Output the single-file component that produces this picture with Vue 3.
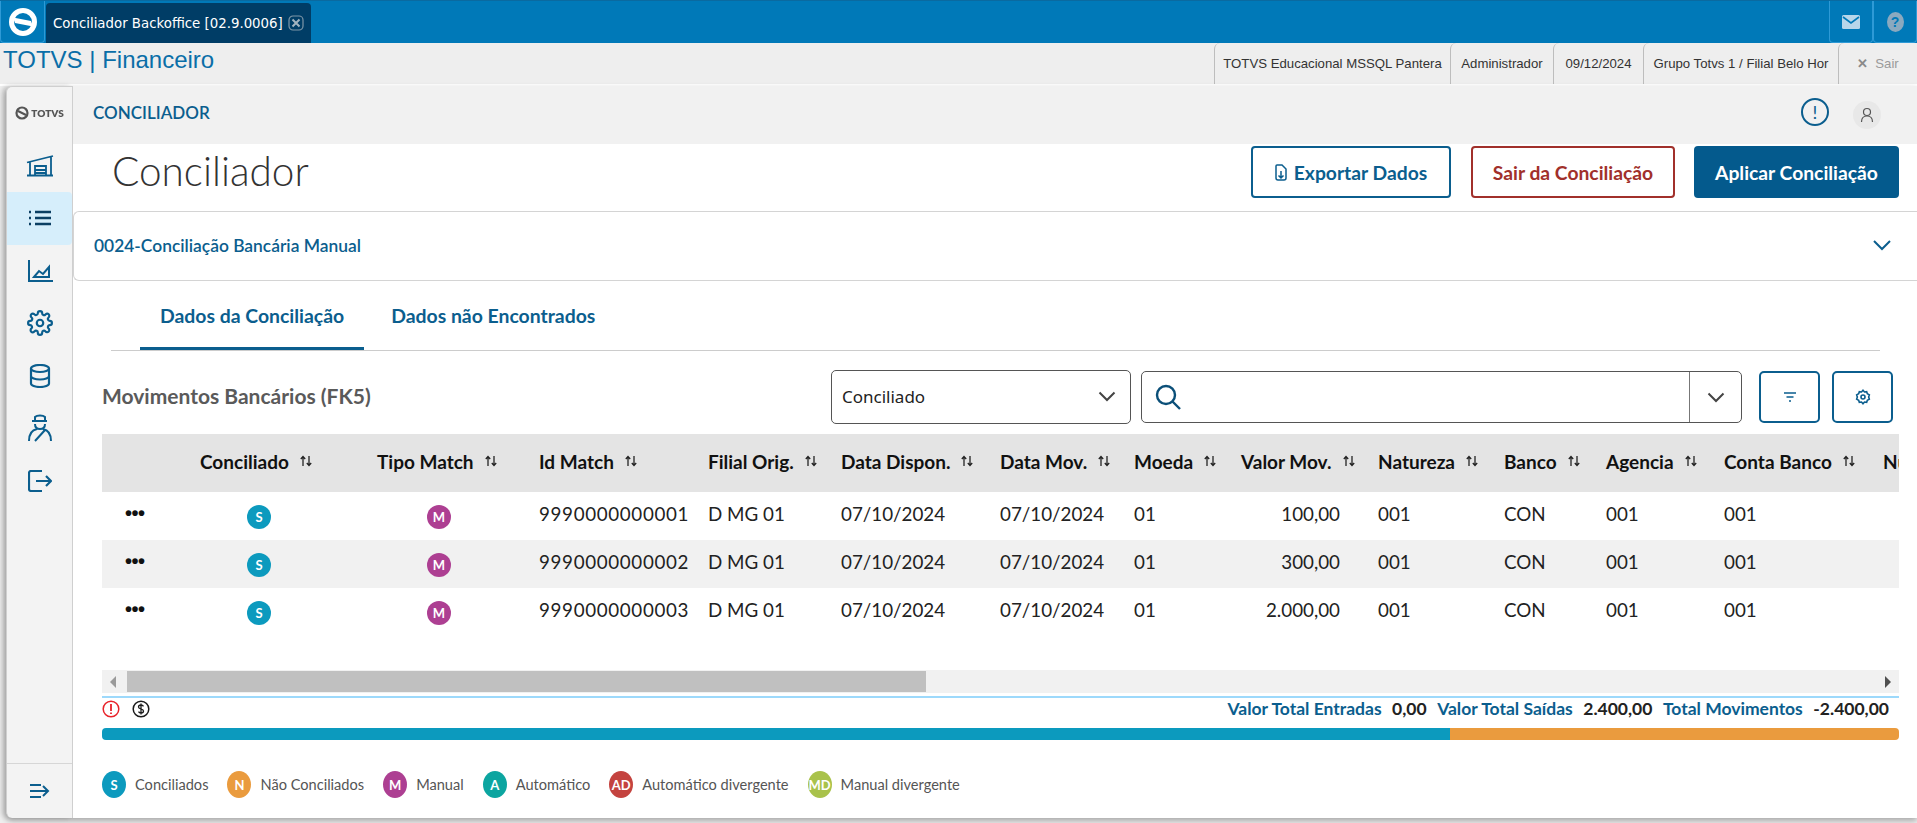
<script setup>
const columns = [
  { label: '', w: 98 }, { label: 'Conciliado', w: 177 }, { label: 'Tipo Match', w: 162 }, { label: 'Id Match', w: 169 },
  { label: 'Filial Orig.', w: 133 }, { label: 'Data Dispon.', w: 159 }, { label: 'Data Mov.', w: 134 }, { label: 'Moeda', w: 107 },
  { label: 'Valor Mov.', w: 137 }, { label: 'Natureza', w: 126 }, { label: 'Banco', w: 102 }, { label: 'Agencia', w: 118 },
  { label: 'Conta Banco', w: 159 }, { label: 'Nu', w: 80 }
]
const gridTemplate = columns.map(c => c.w + 'px').join(' ')
const rows = [
  { id: '9990000000001', valor: '100,00' },
  { id: '9990000000002', valor: '300,00' },
  { id: '9990000000003', valor: '2.000,00' }
]
const legend = [
  { k: 'S', t: 'Conciliados', c: '#0c9abe' }, { k: 'N', t: 'Não Conciliados', c: '#ea9b3e' },
  { k: 'M', t: 'Manual', c: '#ad3f92' }, { k: 'A', t: 'Automático', c: '#0ca5a0' },
  { k: 'AD', t: 'Automático divergente', c: '#c4433f' }, { k: 'MD', t: 'Manual divergente', c: '#a9c24b' }
]
const infoCells = [
  { t: 'TOTVS Educacional MSSQL Pantera', w: 236 }, { t: 'Administrador', w: 103 },
  { t: '09/12/2024', w: 90 }, { t: 'Grupo Totvs 1 / Filial Belo Hor', w: 195 }
]
</script>

<template>
  <div class="page">
    <header class="topbar">
      <div class="logo-btn">
        <svg width="32" height="32" viewBox="0 0 32 32"><circle cx="16" cy="16" r="11.500" fill="none" stroke="#fff" stroke-width="5"/><path d="M6 11.500 L24 15 L26 20.500 L8 17 Z" fill="#fff"/></svg>
      </div>
      <div class="app-tab">
        <span>Conciliador Backoffice [02.9.0006]</span>
        <svg width="16" height="16" viewBox="0 0 16 16" class="tab-x"><rect x="1" y="1" width="14" height="14" rx="4" fill="none" stroke="#7f97a8" stroke-width="1.200"/><path d="M4.500 4.500l7 7M11.500 4.500l-7 7" stroke="#a3b4c0" stroke-width="2"/></svg>
      </div>
      <div class="top-actions">
        <div class="top-btn"><svg width="18" height="14" viewBox="0 0 18 14"><rect width="18" height="14" rx="1.500" fill="#b7d6ea"/><path d="M1 2l8 6 8-6" stroke="#0079b8" stroke-width="1.600" fill="none"/></svg></div>
        <div class="top-btn"><span class="help">?</span></div>
      </div>
    </header>

    <div class="infobar">
      <div class="product">TOTVS | Financeiro</div>
      <div class="info-cells">
        <div v-for="c in infoCells" :key="c.t" class="info-cell" :style="{ width: c.w + 'px' }">{{ c.t }}</div>
        <div class="info-cell exit"><span class="exit-x">✕</span> Sair</div>
      </div>
    </div>

    <div class="main">
      <aside class="sidebar">
        <div class="side-logo">
          <svg width="14" height="14" viewBox="0 0 14 14"><circle cx="7" cy="7" r="5.500" fill="none" stroke="#555" stroke-width="2.200"/><path d="M3 5l8 4" stroke="#555" stroke-width="2"/></svg>
          <span>TOTVS</span>
        </div>
        <div class="side-item">
          <svg width="28" height="22" viewBox="0 0 28 22" fill="none" stroke="#0b5e8e" stroke-width="1.800"><path d="M1 20.500h26M1 7.500 27 1M4 7v13.500M25 1.500v19M9 20.500V11h11v9.500M9 15h11M9 18h11"/></svg>
        </div>
        <div class="side-item active">
          <svg width="24" height="16" viewBox="0 0 24 16" fill="none" stroke="#0b3f63" stroke-width="2.500"><path d="M7 2h16M7 8h16M7 14h16M1 2h2M1 8h2M1 14h2"/></svg>
        </div>
        <div class="side-item">
          <svg width="26" height="24" viewBox="0 0 26 24" fill="none" stroke="#0b5e8e" stroke-width="2"><path d="M2 1v21h24M7 18l5-6 4 3 6-7v10z"/></svg>
        </div>
        <div class="side-item">
          <svg width="26" height="26" viewBox="0 0 24 24" fill="none" stroke="#0b5e8e" stroke-width="2"><circle cx="12" cy="12" r="3"/><path d="M19.400 15a1.700 1.700 0 0 0 .3 1.800l.1.1a2 2 0 1 1-2.800 2.800l-.1-.1a1.700 1.700 0 0 0-2.900 1.200V21a2 2 0 1 1-4 0v-.1A1.700 1.700 0 0 0 7 19.700l-.1.1a2 2 0 1 1-2.800-2.800l.1-.1a1.700 1.700 0 0 0-1.200-2.900H3a2 2 0 1 1 0-4h.1A1.700 1.700 0 0 0 4.300 7l-.1-.1a2 2 0 1 1 2.800-2.800l.1.1a1.700 1.700 0 0 0 1.900.3H9a1.700 1.700 0 0 0 1-1.500V3a2 2 0 1 1 4 0v.1a1.700 1.700 0 0 0 2.900 1.200l.1-.1a2 2 0 1 1 2.800 2.800l-.1.1a1.700 1.700 0 0 0 1.200 2.900h.1a2 2 0 1 1 0 4h-.1a1.700 1.700 0 0 0-1.500 1z"/></svg>
        </div>
        <div class="side-item">
          <svg width="22" height="24" viewBox="0 0 22 24" fill="none" stroke="#0b5e8e" stroke-width="2.200"><ellipse cx="11" cy="4.500" rx="9" ry="3.500"/><path d="M2 4.500v15c0 2 4 3.500 9 3.500s9-1.500 9-3.500v-15M2 12c0 2 4 3.500 9 3.500s9-1.500 9-3.500"/></svg>
        </div>
        <div class="side-item">
          <svg width="24" height="28" viewBox="0 0 24 28" fill="none" stroke="#0b5e8e" stroke-width="2"><path d="M7 7V3c2-2 8-2 10 0v4M4 7h15M7 10c0 3 2 5 5 5s5-2 5-5M1 27c0-7 3-11 8-12M23 27c0-7-3-11-8-12 M7 27l10-11" /></svg>
        </div>
        <div class="side-item">
          <svg width="24" height="22" viewBox="0 0 24 22" fill="none" stroke="#0b5e8e" stroke-width="2.200"><path d="M14 1H3a2 2 0 0 0-2 2v16a2 2 0 0 0 2 2h11M8 11h15M18 6l5 5-5 5"/></svg>
        </div>
        <div class="side-bottom">
          <svg width="20" height="16" viewBox="0 0 20 16" fill="none" stroke="#0b5e8e" stroke-width="2"><path d="M0 2h11M0 8h18M0 14h11M13 3l5 5-5 5"/></svg>
        </div>
      </aside>

      <section class="content">
        <div class="app-header">
          <div class="app-title">CONCILIADOR</div>
          <div class="head-icons">
            <span class="alert-ic">!</span>
            <span class="avatar">
              <svg width="14" height="16" viewBox="0 0 14 16" fill="none" stroke="#555" stroke-width="1.200"><circle cx="7" cy="5" r="3.500"/><path d="M1.500 15c0-4 2-6 5.500-6s5.500 2 5.500 6"/></svg>
            </span>
          </div>
        </div>

        <div class="title-row">
          <h1>Conciliador</h1>
          <div class="title-btns">
            <button class="btn outline">
              <svg width="12" height="17" viewBox="0 0 12 17" fill="none" stroke="#0b5e8e" stroke-width="1.500"><path d="M1 2a1 1 0 0 1 1-1h5l4 4v9a2 2 0 0 1-2 2H3a2 2 0 0 1-2-2zM6 7v7M3.500 11.500 6 14l2.500-2.500"/></svg>
              Exportar Dados
            </button>
            <button class="btn danger">Sair da Conciliação</button>
            <button class="btn primary">Aplicar Conciliação</button>
          </div>
        </div>

        <div class="accordion">
          <span>0024-Conciliação Bancária Manual</span>
          <svg width="20" height="12" viewBox="0 0 20 12" fill="none" stroke="#0b5e8e" stroke-width="2"><path d="M2 2l8 8 8-8"/></svg>
        </div>

        <nav class="tabs">
          <div class="tab on">Dados da Conciliação</div>
          <div class="tab">Dados não Encontrados</div>
        </nav>

        <div class="toolbar">
          <div class="tb-title">Movimentos Bancários (FK5)</div>
          <div class="select">
            <span>Conciliado</span>
            <svg width="18" height="11" viewBox="0 0 18 11" fill="none" stroke="#444" stroke-width="2"><path d="M1.500 1.500 9 9l7.500-7.500"/></svg>
          </div>
          <div class="search">
            <svg width="28" height="28" viewBox="0 0 28 28" fill="none" stroke="#0b4f78" stroke-width="2.400"><circle cx="12" cy="12" r="9"/><path d="M18.500 18.500 26 26"/></svg>
            <div class="search-caret">
              <svg width="18" height="11" viewBox="0 0 18 11" fill="none" stroke="#444" stroke-width="2"><path d="M1.500 1.500 9 9l7.500-7.500"/></svg>
            </div>
          </div>
          <button class="square">
            <svg width="14" height="10" viewBox="0 0 14 10" fill="none" stroke="#0b5e8e" stroke-width="1.600"><path d="M1 1h12M3.500 5h7M6 9h2"/></svg>
          </button>
          <button class="square">
            <svg width="16" height="16" viewBox="0 0 24 24" fill="none" stroke="#0b5e8e" stroke-width="2.400"><circle cx="12" cy="12" r="3"/><path d="M12 2l2.200 2.500 3.300-.5 1 3.200 3 1.500-1 3.300 1 3.300-3 1.500-1 3.200-3.300-.5L12 22l-2.200-2.500-3.300.5-1-3.200-3-1.500 1-3.300-1-3.300 3-1.500 1-3.200 3.300.5z"/></svg>
          </button>
        </div>

        <div class="table">
          <div class="thead" :style="{ gridTemplateColumns: gridTemplate }">
            <div v-for="(c, i) in columns" :key="i" class="th">
              <template v-if="c.label">
                <span>{{ c.label }}</span>
                <svg v-if="c.label !== 'Nu'" width="14" height="12" viewBox="0 0 14 12" fill="none" stroke="#222" stroke-width="1.300"><path d="M4 11V2M1.800 4 4 1.500 6.200 4M10 1v9M7.800 8l2.200 2.500L12.200 8"/></svg>
              </template>
            </div>
          </div>
          <div v-for="r in rows" :key="r.id" class="tr" :style="{ gridTemplateColumns: gridTemplate }">
            <div class="td dots">•••</div>
            <div class="td"><span class="badge b-s" style="background:#0c9abe">S</span></div>
            <div class="td"><span class="badge b-m" style="background:#ad3f92">M</span></div>
            <div class="td idc">{{ r.id }}</div>
            <div class="td">D MG 01</div>
            <div class="td">07/10/2024</div>
            <div class="td">07/10/2024</div>
            <div class="td">01</div>
            <div class="td num">{{ r.valor }}</div>
            <div class="td">001</div>
            <div class="td">CON</div>
            <div class="td">001</div>
            <div class="td">001</div>
            <div class="td"></div>
          </div>
        </div>

        <div class="scrollbar">
          <svg width="8" height="12" viewBox="0 0 8 12" class="arr-l"><path d="M7 0v12L1 6z" fill="#9a9a9a"/></svg>
          <div class="thumb"></div>
          <svg width="8" height="12" viewBox="0 0 8 12" class="arr-r"><path d="M1 0v12l6-6z" fill="#505050"/></svg>
        </div>

        <div class="totals">
          <svg width="18" height="18" viewBox="0 0 18 18" fill="none" stroke="#e8232a" stroke-width="1.500"><circle cx="9" cy="9" r="7.800"/><path d="M9 4v7M9 12.500v1.500" stroke-width="1.800"/></svg>
          <svg class="coin" width="18" height="18" viewBox="0 0 18 18" fill="none" stroke="#1a1a1a" stroke-width="1.500"><circle cx="9" cy="9" r="7.800"/><path d="M11.500 6.300C11 5.500 10 5 9 5 7.500 5 6.500 5.800 6.500 7c0 2.500 5 1.500 5 4 0 1.200-1 2-2.500 2-1 0-2-.5-2.500-1.300M9 3.500v11" stroke-width="1.300"/></svg>
          <div class="sums">
            <span class="k">Valor Total Entradas</span><span class="v">0,00</span>
            <span class="k">Valor Total Saídas</span><span class="v">2.400,00</span>
            <span class="k">Total Movimentos</span><span class="v">-2.400,00</span>
          </div>
        </div>

        <div class="progress">
          <div class="p-a"></div>
          <div class="p-b"></div>
        </div>

        <div class="legend">
          <div v-for="l in legend" :key="l.k" class="lg">
            <span class="badge tall" :style="{ background: l.c }">{{ l.k }}</span>
            <span>{{ l.t }}</span>
          </div>
        </div>
      </section>
    </div>
  </div>
</template>

<style>
html, body { margin: 0; background: #dcdcdc; overflow: hidden; }
</style>

<style scoped>
.page { width: 1917px; height: 823px; overflow: hidden; display: flex; flex-direction: column; font-family: Lato, "Noto Sans", sans-serif; color: #1c1c1c; background: #f0f0f0; }

.topbar { height: 43px; flex: none; box-sizing: border-box; background: #0079b8; border-top: 1px solid #0a6aa0; display: flex; align-items: stretch; }
.logo-btn { width: 45px; height: 42px; border: 1px solid #2e9ad6; border-top: 0; border-radius: 0 0 4px 4px; box-sizing: border-box; display: flex; align-items: center; justify-content: center; }
.app-tab { margin: 2px 0 0 1px; width: 265px; background: #003d66; border-radius: 4px 4px 0 0; color: #fff; font: 13.330px "DejaVu Sans", sans-serif; display: flex; align-items: center; box-sizing: border-box; padding-left: 7px; gap: 5px; }
.tab-x { flex: none; }
.top-actions { margin-left: auto; display: flex; }
.top-btn { width: 44px; border: 1px solid #2e9ad6; border-top: 0; border-radius: 0 0 4px 4px; box-sizing: border-box; display: flex; align-items: center; justify-content: center; }
.help { width: 17px; height: 20px; border-radius: 50%; background: #8aa9bf; color: #0079b8; font: bold 14px "Liberation Sans", sans-serif; display: flex; align-items: center; justify-content: center; }

.infobar { height: 41px; flex: none; margin-bottom: 2px; display: flex; justify-content: space-between; background: #eeeeee; box-shadow: 0 2px 0 #fff; }
.product { font: 24px/34px "Liberation Sans", sans-serif; color: #0a6ea8; padding-left: 3px; }
.info-cells { display: flex; font: 13.200px "Liberation Sans", sans-serif; color: #333; }
.info-cell { border-left: 1px solid #bdbdbd; border-radius: 6px 0 0 0; display: flex; align-items: center; justify-content: center; box-sizing: border-box; white-space: nowrap; }
.info-cell.exit { width: 79px; color: #9a9a9a; gap: 7px; }
.exit-x { font-weight: bold; color: #8a8a8a; }

.main { flex: 1; display: flex; padding-left: 6px; height: 732px; max-height: 732px; filter: drop-shadow(0 3px 3px rgba(0,0,0,.3)); }
.sidebar { width: 67px; height: 732px; box-sizing: border-box; flex: none; background: #f3f3f3; border: 1px solid #cfcfcf; border-bottom: 0; border-radius: 6px 0 0 6px; display: flex; flex-direction: column; box-shadow: -4px 0 5px rgba(0,0,0,.15); }
.side-logo { height: 52.500px; display: flex; align-items: center; justify-content: center; gap: 2px; font: 800 10px Lato, sans-serif; color: #555; flex: none; }
.side-item { height: 52.500px; display: flex; align-items: center; justify-content: center; flex: none; }
.side-item.active { background: #d6eefb; border-radius: 0 4px 4px 0; }
.side-bottom { margin-top: auto; height: 54px; border-top: 1px solid #d6d6d6; display: flex; align-items: center; justify-content: center; }

.content { flex: 1; min-width: 0; height: 732px; background: #fff; display: flex; flex-direction: column; }
.app-header { height: 58px; flex: none; background: #f1f1f1; display: flex; align-items: center; justify-content: space-between; padding: 0 36px 0 20px; }
.app-title { font: 600 17px Lato, sans-serif; color: #0b5e8e; padding-bottom: 6px; }
.head-icons { display: flex; align-items: center; gap: 24px; }
.alert-ic { border: 2px solid #0b5e8e; border-radius: 50%; color: #0b5e8e; font: 18px Lato, sans-serif; display: flex; align-items: center; justify-content: center; margin-bottom: 6px; width: 24px; height: 24px; }
.avatar { width: 28px; height: 28px; border-radius: 50%; background: #e8e8e8; display: flex; align-items: center; justify-content: center; }

.title-row { height: 67px; flex: none; display: flex; justify-content: space-between; padding: 2px 18px 0 39px; box-sizing: border-box; }
h1 { margin: 0; font: 300 40.500px/50px Lato, sans-serif; color: #333; }
.title-btns { display: flex; gap: 19px; }
.btn { height: 52px; border-radius: 4px; font: 700 19.300px Lato, sans-serif; background: #fff; display: flex; align-items: center; justify-content: center; gap: 7px; box-sizing: border-box; }
.btn.outline { width: 200px; margin-right: 1px; border: 2px solid #0b5e8e; color: #0b5e8e; }
.btn.danger { width: 204px; border: 2px solid #a1302b; color: #a1302b; }
.btn.primary { width: 205px; border: 0; background: #045a8d; color: #fff; }

.accordion { height: 70px; flex: none; box-sizing: border-box; border: 1px solid #d4d4d4; border-right: 0; border-radius: 6px 0 0 6px; display: flex; align-items: center; justify-content: space-between; padding: 0 25px 2px 20px; font: 600 17.400px Lato, sans-serif; color: #0b5e8e; }

.tabs { height: 70px; flex: none; box-sizing: border-box; margin: 0 37px 0 38px; border-bottom: 1px solid #cccccc; display: flex; padding-left: 29px; }
.tab { padding: 0 20px; margin-bottom: -1px; height: 69px; box-sizing: border-box; font: 700 19.400px/70px Lato, sans-serif; color: #0b5e8e; }
.tab.on { border-bottom: 3px solid #0b5e8e; }
.tab + .tab { margin-left: 7px; }

.toolbar { height: 83px; flex: none; box-sizing: border-box; padding: 19px 24px 0 29px; display: flex; align-items: flex-start; }
.tb-title { width: 729px; flex: none; font: 700 21px/52px Lato, sans-serif; color: #5a5a5a; }
.select { width: 300px; height: 54px; box-sizing: border-box; border: 1px solid #555; border-radius: 5px; display: flex; align-items: center; justify-content: space-between; padding: 0 14px 2px 10px; font: 17px "Noto Sans", sans-serif; color: #222; flex: none; }
.search { width: 601px; height: 52px; margin: 1px 0 0 10px; box-sizing: border-box; border: 1px solid #555; border-radius: 5px; display: flex; align-items: center; justify-content: space-between; padding-left: 12px; flex: none; }
.search-caret { width: 51px; height: 100%; border-left: 1px solid #777; display: flex; align-items: center; justify-content: center; }
.square { width: 61px; height: 52px; margin: 1px 0 0 12px; box-sizing: border-box; background: #fff; border: 2px solid #0b5e8e; border-radius: 5px; display: flex; align-items: center; justify-content: center; flex: none; padding: 0; }
.search + .square { margin-left: 17px; }

.table { margin: 0 18px 0 29px; height: 236px; flex: none; overflow: hidden; }
.thead, .tr { display: grid; }
.thead { height: 58px; background: #e4e4e4; width: 1797px; overflow: hidden; }
.th { display: flex; align-items: center; gap: 10px; font: 700 19px Lato, sans-serif; color: #111; white-space: nowrap; padding-bottom: 4px; }
.tr { height: 48px; width: 1797px; overflow: hidden; }
.tr:nth-child(3) { background: #f1f1f1; }
.td { display: flex; align-items: center; font: 18.800px Lato, sans-serif; color: #222; padding-bottom: 5px; white-space: nowrap; }
.td.idc { letter-spacing: 0.650px; }
.td.dots { padding-left: 23px; font: bold 20px "Liberation Sans", sans-serif; letter-spacing: -0.500px; color: #111; }
.td.num { justify-content: flex-end; padding-right: 38px; }
.badge { width: 24px; height: 24px; border-radius: 50%; color: #fff; display: inline-flex; align-items: center; justify-content: center; font: 700 13px Lato, sans-serif; flex: none; }
.badge.tall { height: 27px; }
.b-s { margin: 7px 0 0 47px; }
.b-m { margin: 7px 0 0 50px; }

.scrollbar { margin: 0 18px 0 29px; height: 23px; flex: none; background: #f1f1f1; display: flex; align-items: center; position: relative; padding-left: 25px; box-sizing: border-box; }
.arr-l { position: absolute; left: 7px; top: 6px; }
.arr-r { position: absolute; right: 7px; top: 6px; }
.thumb { width: 799px; height: 21px; background: #c0c0c0; }

.totals { margin: 3px 18px 0 29px; height: 32px; flex: none; box-sizing: border-box; border-top: 2px solid #9dd9fb; display: flex; align-items: flex-start; padding: 2px 10px 0 0; }
.coin { margin-left: 12px; }
.sums { margin-left: auto; margin-top: -1px; display: flex; font: 700 17.500px/20px Lato, sans-serif; }
.k { color: #0b5e8e; margin-right: 10.500px; }
.v { color: #222; margin-right: 10.500px; }
.v:last-child { margin-right: 0; }

.progress { margin: 0 18px 0 29px; height: 12px; flex: none; display: flex; border-radius: 4px; overflow: hidden; }
.p-a { width: 1348px; background: #0c9abe; }
.p-b { flex: 1; background: #ea9b3e; }

.legend { margin: 31px 0 0 29px; display: flex; gap: 19px; flex: none; font: 14.600px Lato, sans-serif; color: #555; }
.lg { display: flex; align-items: center; gap: 9px; }
</style>
